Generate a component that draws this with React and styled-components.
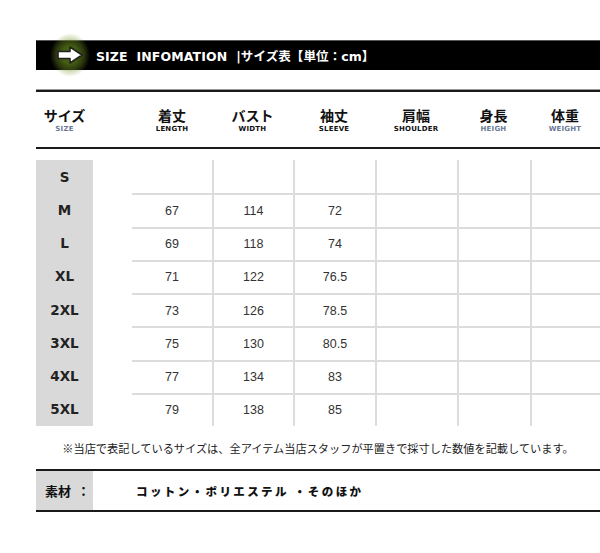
import styled, { createGlobalStyle } from "styled-components";

const GlobalStyle = createGlobalStyle`
  body {
    margin: 0;
    background: #fff;
    font-family: "Noto Sans CJK JP", "Liberation Sans", sans-serif;
  }
`;

const sizeRows = [
  { size: "S", length: "", width: "", sleeve: "" },
  { size: "M", length: "67", width: "114", sleeve: "72" },
  { size: "L", length: "69", width: "118", sleeve: "74" },
  { size: "XL", length: "71", width: "122", sleeve: "76.5" },
  { size: "2XL", length: "73", width: "126", sleeve: "78.5" },
  { size: "3XL", length: "75", width: "130", sleeve: "80.5" },
  { size: "4XL", length: "77", width: "134", sleeve: "83" },
  { size: "5XL", length: "79", width: "138", sleeve: "85" },
];

const headers = [
  { jp: "着丈", en: "LENGTH" },
  { jp: "バスト", en: "WIDTH" },
  { jp: "袖丈", en: "SLEEVE" },
  { jp: "肩幅", en: "SHOULDER" },
  { jp: "身長", en: "HEIGH", muted: true },
  { jp: "体重", en: "WEIGHT", muted: true },
];

const COLS = "57px 39px 80px 81px 82px 82px 73px 70px";

function App() {
  return (
    <Page>
      <GlobalStyle />
      <Banner>
        <Glow>
          <svg width="28" height="20" viewBox="0 0 28 20">
            <path
              d="M2 6.5 H14 V2 L26 10 L14 18 V13.5 H2 Z"
              fill="#fff"
              stroke="#222"
              strokeWidth="1.6"
              strokeLinejoin="round"
            />
          </svg>
        </Glow>
        <BannerTitle>
          SIZE&nbsp; INFOMATION&nbsp; |サイズ表【単位：cm】
        </BannerTitle>
      </Banner>

      <HeaderRow>
        <HeadCell>
          <Jp>サイズ</Jp>
          <En $muted>SIZE</En>
        </HeadCell>
        <span />
        {headers.map((h) => (
          <HeadCell key={h.en}>
            <Jp>{h.jp}</Jp>
            <En $muted={h.muted}>{h.en}</En>
          </HeadCell>
        ))}
      </HeaderRow>

      <Table>
        {sizeRows.map((row, r) => [
          <SizeCell key={"s" + r}>{row.size}</SizeCell>,
          <span key={"g" + r} />,
          ...[row.length, row.width, row.sleeve, "", "", ""].map((v, c) => (
            <DataCell key={r + "-" + c} $top={r > 0} $left={c > 0}>
              {v}
            </DataCell>
          )),
        ])}
      </Table>

      <Note>
        ※当店で表記しているサイズは、全アイテム当店スタッフが平置きで採寸した数値を記載しています。
      </Note>

      <Material>
        <MaterialLabel>素材&nbsp;&nbsp;：</MaterialLabel>
        <MaterialText>コットン・ポリエステル ・そのほか</MaterialText>
      </Material>
    </Page>
  );
}

export default App;

const Page = styled.div`
  width: 564px;
  padding: 40px 0 40px 36px;
`;

const Banner = styled.div`
  height: 30px;
  background: #000;
  border-top: 1px solid #555;
  box-sizing: border-box;
  display: flex;
  align-items: center;
  padding-left: 14px;
  gap: 6px;
`;

const Glow = styled.div`
  width: 40px;
  height: 44px;
  margin: -8px 0 -6px;
  border-radius: 50%;
  display: flex;
  align-items: center;
  justify-content: center;
  background: radial-gradient(
    ellipse 50% 50% at center,
    rgba(70, 95, 15, 1) 0%,
    rgba(80, 110, 20, 0.85) 40%,
    rgba(120, 150, 40, 0.35) 72%,
    rgba(140, 170, 60, 0) 100%
  );
`;

const BannerTitle = styled.div`
  color: #fff;
  font-family: "DejaVu Sans", "Noto Sans CJK JP", sans-serif;
  font-weight: bold;
  font-size: 12.5px;
  letter-spacing: 0.1px;
  white-space: nowrap;
`;

const HeaderRow = styled.div`
  margin-top: 19px;
  border-top: 1px solid #999;
  box-shadow: inset 0 2px 0 #1a1a1a;
  border-bottom: 2px solid #1a1a1a;
  height: 60px;
  box-sizing: border-box;
  display: grid;
  grid-template-columns: ${COLS};
  align-items: center;
  padding-top: 4px;
`;

const HeadCell = styled.div`
  display: flex;
  flex-direction: column;
  align-items: center;
  gap: 1px;
`;

const Jp = styled.div`
  font-family: "Noto Sans CJK JP", sans-serif;
  font-weight: bold;
  font-size: 14px;
  line-height: 17px;
  color: #111;
`;

const En = styled.div`
  font-family: "DejaVu Sans", sans-serif;
  font-weight: bold;
  font-size: 7px;
  line-height: 9px;
  letter-spacing: 0.2px;
  color: ${(p) => (p.$muted ? "#6b7a96" : "#111")};
`;

const Table = styled.div`
  margin-top: 11px;
  display: grid;
  grid-template-columns: ${COLS};
  grid-auto-rows: 33.25px;
`;

const SizeCell = styled.div`
  background: #d9d9d9;
  display: flex;
  align-items: center;
  justify-content: center;
  font-family: "DejaVu Sans", sans-serif;
  font-weight: bold;
  font-size: 13.5px;
  color: #222;
`;

const DataCell = styled.div`
  display: flex;
  align-items: center;
  justify-content: center;
  box-sizing: border-box;
  border-top: ${(p) => (p.$top ? "2px solid #dcdcdc" : "none")};
  border-left: ${(p) => (p.$left ? "2px solid #dcdcdc" : "none")};
  font-family: "Liberation Sans", sans-serif;
  font-size: 12.5px;
  color: #333;
`;

const Note = styled.div`
  height: 43px;
  display: flex;
  align-items: center;
  justify-content: center;
  font-size: 11.2px;
  color: #222;
  white-space: nowrap;
`;

const Material = styled.div`
  display: flex;
  align-items: center;
  height: 43px;
  box-sizing: border-box;
  border-top: 2px solid #1a1a1a;
  border-bottom: 2px solid #1a1a1a;
`;

const MaterialLabel = styled.div`
  width: 57px;
  height: 100%;
  background: #d9d9d9;
  box-sizing: border-box;
  padding-left: 9px;
  display: flex;
  align-items: center;
  font-weight: bold;
  font-size: 13px;
  color: #111;
  white-space: nowrap;
`;

const MaterialText = styled.div`
  margin-left: 43px;
  font-weight: 900;
  font-size: 11.5px;
  letter-spacing: 2.4px;
  color: #111;
`;
